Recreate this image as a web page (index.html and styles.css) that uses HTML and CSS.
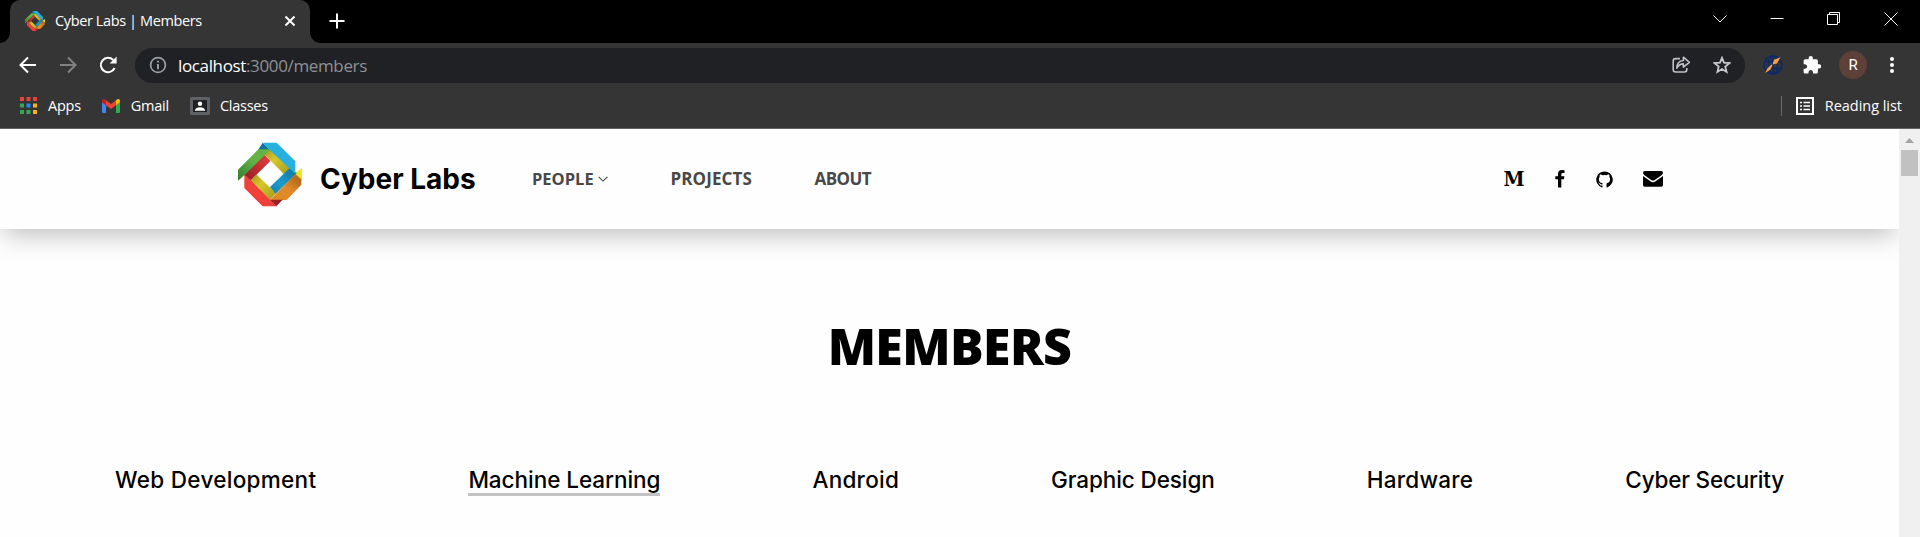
FILE: index.html
```html
<!DOCTYPE html>
<html lang="en">
<head>
<meta charset="utf-8">
<title>Cyber Labs | Members</title>
<link rel="stylesheet" href="styles.css">
</head>
<body>
<svg width="0" height="0" class="defs">
  <defs>
    <linearGradient id="g-green" x1="1" y1="0" x2="0" y2="1"><stop offset=".45" stop-color="#62b244"/><stop offset="1" stop-color="#2f7d32"/></linearGradient>
    <linearGradient id="g-red" x1="1" y1="0" x2="0" y2="1"><stop offset=".2" stop-color="#d9383a"/><stop offset="1" stop-color="#8e1f22"/></linearGradient>
    <linearGradient id="g-yel" x1="0" y1="0" x2="1" y2="1"><stop offset="0" stop-color="#a3951d"/><stop offset=".4" stop-color="#d8c72b"/><stop offset="1" stop-color="#a3981e"/></linearGradient>
    <linearGradient id="g-blue" x1="1" y1="0" x2="0" y2="1"><stop offset="0" stop-color="#0f6f9c"/><stop offset=".6" stop-color="#1b9ccd"/><stop offset="1" stop-color="#167daa"/></linearGradient>
    <linearGradient id="g-or" x1="1" y1="0" x2="0" y2="1"><stop offset=".2" stop-color="#b86f1d"/><stop offset=".5" stop-color="#e08a27"/></linearGradient>
    <symbol id="logo" viewBox="24 23 192 193">
      <path fill="#f6e423" d="M24 102V138L50 115ZM216 100V140L190 118Z"/>
      <path fill="url(#g-yel)" d="M104 60L120 42L182 102L162 119Z"/>
      <path fill="url(#g-red)" d="M103 60L121 79L62 138L42 120Z"/>
      <path fill="url(#g-yel)" d="M80 120L138 176L120 196L60 138Z"/>
      <path fill="url(#g-blue)" d="M180 99L200 116L137 177L120 157Z"/>
      <path fill="#126f9a" d="M98 24L120 46H84Z"/>
      <path fill="#28b1df" d="M98 24H140L196 80V118L116 43Z"/>
      <path fill="url(#g-green)" d="M24 105L85 44H122L50 115L24 138Z"/>
      <path fill="#f13f3a" d="M43 120L62 137L140 215H98L43 160Z"/>
      <path fill="url(#g-or)" d="M196 118L214 134V150L170 196H120Z"/>
      <path fill="#9c2020" d="M120 195H158L139 215Z"/>
    </symbol>
  </defs>
</svg>

<div class="tabstrip">
  <div class="tab">
    <svg class="favicon" width="20" height="20"><use href="#logo"/></svg>
    <span class="tab-title">Cyber Labs | Members</span>
    <svg class="tab-close" width="12" height="12" viewBox="0 0 12 12"><path d="M1.5 1.5L10.5 10.5M10.5 1.5L1.5 10.5" stroke="#fff" stroke-width="2"/></svg>
  </div>
  <svg class="new-tab" width="16" height="16" viewBox="0 0 16 16"><path d="M8 .5V15.5M.5 8H15.5" stroke="#fff" stroke-width="2"/></svg>
  <div class="window-controls">
    <svg width="14" height="14" viewBox="0 0 14 14"><path d="M.5 3.5L7 10L13.5 3.5"/></svg>
    <svg width="14" height="14" viewBox="0 0 14 14"><path d="M.5 6.5H13.5"/></svg>
    <svg width="14" height="14" viewBox="0 0 14 14"><path d="M.5 2.5H10.5V12.5H.5ZM2.5 2.5V.5H12.5V10.5H10.5"/></svg>
    <svg width="14" height="14" viewBox="0 0 14 14"><path d="M.5 .5L13.5 13.5M13.5 .5L.5 13.5"/></svg>
  </div>
</div>

<div class="toolbar">
  <svg class="tool-back" width="18" height="18" viewBox="0 0 18 18"><path d="M17 9H2M9 1.5L1.5 9L9 16.5" fill="none" stroke="#fff" stroke-width="2"/></svg>
  <svg class="tool-forward" width="18" height="18" viewBox="0 0 18 18"><path d="M1 9H16M9 1.5L16.5 9L9 16.5" fill="none" stroke="#828282" stroke-width="2"/></svg>
  <svg class="tool-reload" width="18" height="18" viewBox="0 0 18 18"><path d="M15.6 12A7.2 7.2 0 1 1 14.2 4" fill="none" stroke="#fff" stroke-width="2"/><path fill="#fff" d="M17.6 .6V7.6H10.6Z"/></svg>
  <div class="omnibox">
    <svg class="info" width="18" height="18" viewBox="0 0 18 18"><circle cx="9" cy="9" r="7.4" fill="none" stroke="#9aa0a6" stroke-width="1.7"/><path d="M9 8V13.2M9 4.8V6.6" stroke="#9aa0a6" stroke-width="1.9"/></svg>
    <span class="url"><b>localhost</b>:3000/members</span>
    <svg class="share" width="19" height="18" viewBox="0 0 19 18"><path d="M8 2.6H3.6Q1.2 2.6 1.2 5V13.6Q1.2 16 3.6 16H12.4Q14.8 16 14.8 13.6V12" fill="none" stroke="#bdc1c6" stroke-width="1.6"/><path d="M4.8 12.2Q5.2 4.8 11.4 4.5V1.2L17.4 6.3L11.4 11.2V7.9Q7 8 4.8 12.2Z" fill="none" stroke="#bdc1c6" stroke-width="1.6" stroke-linejoin="round"/></svg>
    <svg width="18" height="18" viewBox="0 0 18 18"><path d="M9 1.8L11 6.7L16.4 7.1L12.3 10.6L13.6 15.9L9 13.1L4.4 15.9L5.7 10.6L1.6 7.1L7 6.7Z" fill="none" stroke="#c6c9cd" stroke-width="1.8"/></svg>
  </div>
  <svg class="ext-globe" width="20" height="20" viewBox="0 0 20 20"><g fill="none" stroke="#0b2a6b" stroke-width="1.6"><circle cx="10" cy="10" r="9"/><ellipse cx="10" cy="10" rx="4.6" ry="9"/><path d="M1.5 6.5H18.5M1.5 13.5H18.5M10 1V19"/></g><path fill="#f9a03f" d="M17.5 2.2L11 4.7L9.6 9.4L14 8.4ZM8.6 9.6L4.5 13.3L2 18L7.2 14.8L9.5 10.6Z"/></svg>
  <svg class="ext-puzzle" width="18" height="18" viewBox="1.5 1 21 21.5"><path fill="#fff" d="M20.5 11H19V7c0-1.100-.9-2-2-2h-4V3.500a2.500 2.500 0 0 0-5 0V5H4c-1.100 0-2 .9-2 2v3.800h1.500c1.500 0 2.700 1.200 2.700 2.700S5 16.200 3.500 16.200H2V20c0 1.100.9 2 2 2h3.800v-1.500c0-1.500 1.200-2.700 2.700-2.700s2.700 1.200 2.700 2.700V22H17c1.100 0 2-.9 2-2v-4h1.500a2.500 2.500 0 0 0 0-5z"/></svg>
  <div class="avatar">R</div>
  <svg class="kebab" width="6" height="18" viewBox="0 0 6 18"><g fill="#fff"><circle cx="3" cy="3" r="2"/><circle cx="3" cy="9" r="2"/><circle cx="3" cy="15" r="2"/></g></svg>
</div>

<div class="bookmarks">
  <svg width="17" height="17" viewBox="0 0 17 17"><path fill="#ea4335" d="M0 0H4V4H0ZM6.500 0H10.500V4H6.500ZM13 0H17V4H13Z"/><path fill="#34a853" d="M0 6.500H4V10.500H0ZM0 13H4V17H0ZM6.500 13H10.500V17H6.500Z"/><path fill="#1a8cff" d="M6.500 6.500H10.500V10.500H6.500Z"/><path fill="#fbaf17" d="M13 6.500H17V10.500H13ZM13 13H17V17H13Z"/></svg>
  <span class="bm-apps">Apps</span>
  <svg width="18" height="14" viewBox="0 0 18 14"><path fill="#4285f4" d="M0 3L4 6V14H1.200Q0 14 0 12.800Z"/><path fill="#34a853" d="M18 3L14 6V14H16.800Q18 14 18 12.800Z"/><path fill="#ea4335" d="M4 1.300L9 5L14 1.300V6.200L9 10L4 6.200Z"/><path fill="#c5221f" d="M0 3V1.800Q.3-.6 2.700.3L4 1.300V6.200L0 3.200Z"/><path fill="#fbbc04" d="M18 3V1.800Q17.700-.6 15.300.3L14 1.300V6.200L18 3.200Z"/></svg>
  <span class="bm-gmail">Gmail</span>
  <svg width="20" height="18" viewBox="0 0 20 18"><rect width="20" height="18" rx="1.500" fill="#5f6368"/><rect x="3" y="3" width="14" height="12" fill="#202124"/><circle cx="10" cy="6.800" r="2.200" fill="#fff"/><path fill="#fff" d="M5 13.800V12.700Q6 10.400 10 10.300Q14 10.400 15 12.700V13.800Z"/></svg>
  <span class="bm-classes">Classes</span>
  <div class="reading">
    <svg width="18" height="18" viewBox="0 0 18 18"><path d="M1 1H17V17H1Z" fill="none" stroke="#fff" stroke-width="2"/><path d="M4 5.500H6M4 9H6M4 12.500H6M7.500 5.500H14M7.500 9H14M7.500 12.500H14" stroke="#fff" stroke-width="1.500"/></svg>
    <span>Reading list</span>
  </div>
</div>

<div class="viewport">
  <div class="page">
    <header class="header">
      <svg class="brand-logo" width="64" height="65"><use href="#logo"/></svg>
      <span class="brand">Cyber Labs</span>
      <nav class="nav">
        <a class="nav-people">PEOPLE<svg width="10" height="6" viewBox="0 0 10 6"><path d="M.6 .8L5 5.100L9.400 .8" fill="none" stroke="#484848" stroke-width="1.100"/></svg></a>
        <a class="nav-projects">PROJECTS</a>
        <a class="nav-about">ABOUT</a>
      </nav>
      <div class="social">
        <span class="medium">M</span>
        <svg class="facebook" width="10" height="18" viewBox="0 0 10 18"><path d="M9.500 .2V3H7.800Q6.300 3 6.300 4.400V6.300H9.400L9 9.300H6.300V17.500H3V9.300H.3V6.300H3V3.900Q3 0 7 0Q8.800 0 9.500 .2Z"/></svg>
        <svg class="github" width="17" height="17" viewBox="0 0 17 17"><path d="M8.500 .4A8.200 8.200 0 0 0 5.900 16.400C6.300 16.500 6.500 16.200 6.500 16V14.400C4.200 14.900 3.700 13.400 3.700 13.400C3.300 12.400 2.700 12.200 2.700 12.200C2 11.700 2.800 11.700 2.800 11.700C3.700 11.800 4.100 12.600 4.100 12.600C4.900 13.900 6.100 13.500 6.500 13.300C6.600 12.700 6.500 12.300 6.100 12.100C4.200 11.900 2.900 10.900 2.900 8.100C2.900 7.200 3.200 6.500 3.700 5.900C3.600 5.700 3.300 4.800 3.800 3.700C3.800 3.700 4.700 3.300 6.300 4.200A9 9 0 0 1 10.700 4.200C12.300 3.300 13.200 3.700 13.200 3.700C13.700 4.800 13.400 5.700 13.300 5.900C13.800 6.500 14.100 7.200 14.100 8.100C14.100 10.900 12.800 11.900 10.900 12.100C10.600 12.400 10.500 12.900 10.500 13.700V16C10.500 16.200 10.700 16.500 11.100 16.400A8.200 8.200 0 0 0 8.500 .4Z"/></svg>
        <svg width="20" height="16" viewBox="0 0 20 16"><path d="M1.800 0H18.200Q20 0 20 1.800Q20 3.200 18.500 4.300L11.800 9Q10 10.200 8.200 9L1.500 4.300Q0 3.200 0 1.800Q0 0 1.800 0ZM0 5L7.400 10.300Q10 12 12.600 10.300L20 5V14Q20 15.700 18.200 15.700H1.800Q0 15.700 0 14Z"/></svg>
      </div>
    </header>
    <main class="main">
      <h1 class="title">MEMBERS</h1>
      <div class="domains">
        <a class="web">Web Development</a>
        <a class="active">Machine Learning</a>
        <a>Android</a>
        <a class="graphic">Graphic Design</a>
        <a>Hardware</a>
        <a class="security">Cyber Security</a>
      </div>
    </main>
  </div>
  <div class="scrollbar">
    <svg width="9" height="5" viewBox="0 0 9 5"><path fill="#a3a3a3" d="M4.500 0L9 5H0Z"/></svg>
    <div class="thumb"></div>
  </div>
</div>
</body>
</html>
```
FILE: styles.css
```css
* { box-sizing: border-box; }
body { margin: 0; height: 537px; overflow: hidden; background: #fff; font-family: "Open Sans", sans-serif; display: flex; flex-direction: column; }
svg { display: block; flex: none; }
.defs { position: absolute; }

.tabstrip { height: 43px; background: #000; display: flex; align-items: flex-start; padding-left: 10px; flex: none; }
.tab { position: relative; width: 300px; height: 43px; background: #353535; border-radius: 10px 10px 0 0; display: flex; align-items: center; padding: 0 14px 1px 15px; }
.tab::before, .tab::after { content: ""; position: absolute; bottom: 0; width: 10px; height: 10px; }
.tab::before { left: -10px; background: radial-gradient(circle at 0 0, #000 9.500px, #353535 10px); }
.tab::after { right: -10px; background: radial-gradient(circle at 100% 0, #000 9.500px, #353535 10px); }
.tab-title { margin: 0 0 2px 10px; font-size: 14.500px; letter-spacing: -.38px; color: #fff; white-space: nowrap; }
.tab-close { margin-left: auto; }
.new-tab { margin: 13px 0 0 19px; }
.window-controls { margin: 12px 22px 0 auto; display: flex; gap: 43px; }
.window-controls path { fill: none; stroke: #fff; stroke-width: 1; }

.toolbar { height: 44px; background: #353535; display: flex; align-items: center; padding-left: 19px; flex: none; }
.tool-forward { margin-left: 22px; }
.tool-reload { margin-left: 22px; }
.omnibox { width: 1610px; height: 35px; margin-left: 18px; border-radius: 18px; background: #202124; display: flex; align-items: center; padding: 0 14px; }
.url { margin-left: 11px; font-size: 17px; letter-spacing: -.36px; color: #8f9195; white-space: nowrap; }
.url b { font-weight: 400; color: #fff; }
.share { margin: 0 22px 0 auto; }
.ext-globe { margin-left: 18px; }
.ext-puzzle { margin-left: 20px; }
.avatar { width: 28px; height: 28px; margin-left: 18px; border-radius: 50%; background: #5d4037; color: #fff; font: 15px/29px Roboto, sans-serif; text-align: center; }
.kebab { margin-left: 22px; }

.bookmarks { height: 42px; background: #353535; border-bottom: 1px solid #626262; display: flex; align-items: center; padding: 0 18px 4px 20px; color: #fff; font-size: 14.500px; letter-spacing: -.25px; flex: none; }
.bookmarks span { padding-bottom: 1px; }
.bm-apps { margin: 0 21px 0 11px; }
.bm-gmail { margin: 0 21px 0 11px; }
.bm-classes { margin-left: 10px; }
.reading { margin-left: auto; height: 20px; border-left: 1px solid #6b6b6b; padding-left: 14px; display: flex; align-items: center; gap: 11px; letter-spacing: -.03px; }

.viewport { flex: 1; display: flex; min-height: 0; }
.page { flex: 1; overflow: hidden; background: #fefefe; }
.header { height: 100px; background: #fefefe; box-shadow: 0 10px 24px -4px rgba(0, 0, 0, .25); display: flex; align-items: center; padding-left: 238px; }
.brand-logo { margin-bottom: 9px; }
.brand { width: 175px; margin-left: 18px; font: 700 28px/34px Inter, sans-serif; color: #000; white-space: nowrap; }
.nav { display: flex; align-items: center; margin-left: 36px; padding-left: 1px; font-size: 17px; font-weight: 700; line-height: 24px; color: #484848; }
.nav-people { display: flex; align-items: center; gap: 4px; width: 138.500px; font-size: 16.500px; }
.nav-projects { width: 144px; letter-spacing: .1px; }
.nav-about { letter-spacing: -.55px; }
.social { margin: 0 236px 0 auto; display: flex; align-items: center; }
.medium { font: bold 20px/24px "DejaVu Serif", serif; transform: scaleX(.95); }
.facebook { margin-left: 30px; }
.github { margin: 0 30px 0 31px; }

.main { padding: 84px 115px 0 115px; }
.title { margin: 0; text-align: center; font-size: 50px; line-height: 66px; font-weight: 800; letter-spacing: -.6px; color: #000; }
.domains { margin-top: 87px; display: flex; justify-content: space-between; align-items: flex-start; font: 500 22.500px/27px Inter, sans-serif; letter-spacing: .25px; color: #000; white-space: nowrap; }
.web { letter-spacing: .3px; }
.active { border-bottom: 3px solid #c2c2c2; letter-spacing: -.05px; }
.graphic { letter-spacing: -.1px; }
.security { letter-spacing: -.2px; }

.scrollbar { width: 21px; background: #f0f0f0; display: flex; flex-direction: column; align-items: center; padding-top: 9px; }
.thumb { width: 17px; height: 26px; margin-top: 7px; background: #c1c1c1; }
```
